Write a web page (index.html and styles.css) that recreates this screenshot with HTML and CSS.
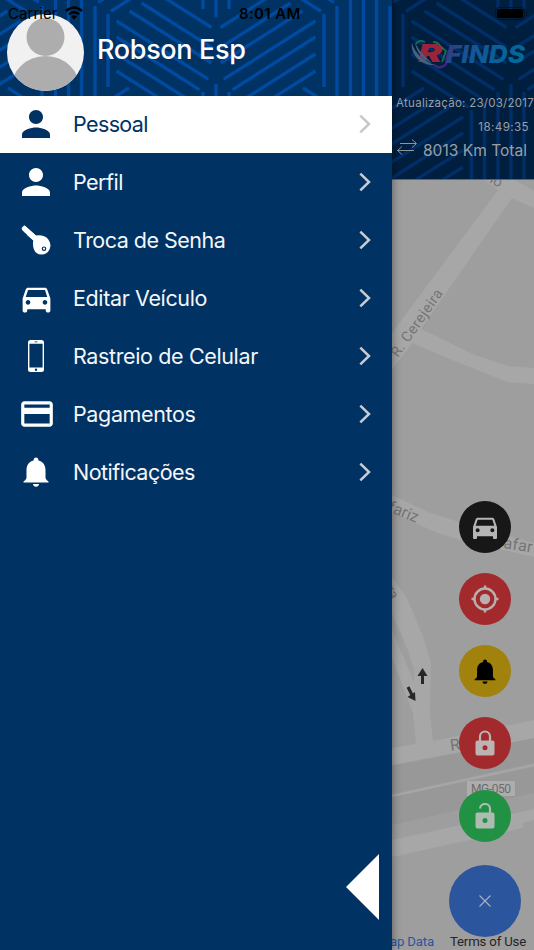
FILE: index.html
```html
<!DOCTYPE html>
<html lang="pt-BR">
<head>
<meta charset="utf-8">
<title>RFinds</title>
<link rel="stylesheet" href="styles.css">
</head>
<body>
<svg class="defs" width="0" height="0" aria-hidden="true">
  <defs>
    <g id="half">
      <path d="M39.5 14V87M26.5 6V96M13 -4V105M48 21L140 79.4M48 37L131 89.7M48 54L118 98.4M48 71L105 107.2M61 11L143 63M73 3L143 47.5M87 -8L143 27.5"/>
    </g>
    <g id="motif" fill="none" stroke-width="3.4">
      <path d="M0 -12V113"/>
      <use href="#half"/>
      <use href="#half" transform="scale(-1 1)"/>
    </g>
    <g id="weave">
      <use href="#motif" x="-79" y="-96"/><use href="#motif" x="216" y="-96"/><use href="#motif" x="511" y="-96"/>
      <use href="#motif" x="68.5"/><use href="#motif" x="363.5"/><use href="#motif" x="658.5"/>
      <use href="#motif" x="-79" y="96"/><use href="#motif" x="216" y="96"/><use href="#motif" x="511" y="96"/>
    </g>
    <symbol id="person" viewBox="0 0 24 24"><path d="M12 12c2.21 0 4-1.79 4-4s-1.79-4-4-4-4 1.79-4 4 1.79 4 4 4zm0 2c-2.67 0-8 1.34-8 4v2h16v-2c0-2.66-5.33-4-8-4z"/></symbol>
    <symbol id="car" viewBox="0 0 24 24"><path d="M18.92 6.01C18.72 5.42 18.16 5 17.5 5h-11c-.66 0-1.21.42-1.42 1.01L3 12v8c0 .55.45 1 1 1h1c.55 0 1-.45 1-1v-1h12v1c0 .55.45 1 1 1h1c.55 0 1-.45 1-1v-8l-2.08-5.99zM6.5 16c-.83 0-1.5-.67-1.5-1.5S5.67 13 6.5 13s1.5.67 1.5 1.5S7.33 16 6.5 16zm11 0c-.83 0-1.5-.67-1.5-1.5s.67-1.5 1.5-1.5 1.5.67 1.5 1.5-.67 1.5-1.5 1.5zM5 11l1.5-4.5h11L19 11H5z"/></symbol>
    <symbol id="bell" viewBox="0 0 26 30"><path d="M13 .5c1.4 0 2.4 1 2.4 2.3v.7c4.600 1.100 7.100 4.700 7.100 9.500v7.500c0 1.500 1 2.600 3 4v1H.5v-1c2-1.400 3-2.500 3-4V13c0-4.800 2.500-8.400 7.100-9.500v-.7C10.600 1.500 11.600.5 13 .5zM10 27h6c0 1.600-1.300 2.800-3 2.800S10 28.600 10 27z"/></symbol>
    <symbol id="chevron" viewBox="0 0 12 20"><path d="M1.300 1.700L10 10L1.300 18.300" fill="none" stroke="currentColor" stroke-width="2.500"/></symbol>
  </defs>
</svg>
<div class="screen">
  <header class="top">
    <svg class="weave dim" width="534" height="180"><use href="#weave"/></svg>
    <div class="info">
      <svg class="logo" width="118" height="34" viewBox="0 0 118 34">
        <defs><linearGradient id="blue" x1="0" x2="1" y1="0" y2=".3"><stop offset="0" stop-color="#403078"/><stop offset=".35" stop-color="#185294"/><stop offset="1" stop-color="#006a9c"/></linearGradient></defs>
        <path d="M7 7Q10 2 16 5M24 5Q29 5 31 9L37 14L33 25" fill="none" stroke="#176e4c" stroke-width="1.800"/>
        <path d="M25 28Q32 33 37 27L39 16Q41 11 47 11" fill="none" stroke="#3b267b" stroke-width="2.600"/>
        <text x="9" y="25" class="logo-r" textLength="24" lengthAdjust="spacingAndGlyphs">R</text>
        <path d="M3 6C1 16 11 29 26 28C14 24 5 15 3 6zM6 5C7 15 14 23 23 26C16 20 9 13 6 5z" fill="#47627f"/>
        <text x="37" y="25.500" class="logo-finds" fill="url(#blue)" textLength="79" lengthAdjust="spacingAndGlyphs">FINDS</text>
      </svg>
      <div class="update">Atualização: 23/03/2017</div>
      <div class="time">18:49:35</div>
      <div class="distance">
        <svg width="22" height="17" viewBox="0 0 22 17" fill="none" stroke="#8d949c" stroke-width="1"><path d="M4 4.500H20M16 .5L20.500 4.500L16 8.500M18 11.500H1.500M6 7.500L1.500 11.500L6 15.500"/></svg>
        <span>8013 Km Total</span>
      </div>
    </div>
  </header>
  <main class="map">
    <svg class="roads" width="534" height="770" viewBox="0 180 534 770">
      <g fill="#989898"><path d="M392 766L534 738V763L392 794zM392 797L534 767V793L392 825z"/></g>
      <g fill="#a7a7a7">
        <path d="M485 180H515L534 191V208L512 198L421 329L475 355L508 366L534 368V384L507 382L485 373L452 360L412 343L392 370V333L498 190z"/>
        <path d="M392 495L428 512L462 523L534 543V557L460 540L435 532L392 512z"/>
        <path d="M392 577L408 600L423 637L431 663L430 713L433 741L534 720V738L392 765V748L416 744L413 713L392 658V630L414 682V670L408 650L392 613z"/>
        <path d="M392 840L534 809V820L523 823V828L392 857z"/>
      </g>
      <path d="M392 796L534 765" stroke="#a7a7a7" stroke-width="2"/>
      <g class="street">
        <text transform="translate(398 358) rotate(-55)" textLength="79">R. Cerejeira</text>
        <text transform="translate(489 182) rotate(29)">io</text>
        <text class="major" transform="translate(387 511) rotate(22)">fariz</text>
        <text class="major" transform="translate(503 548) rotate(9)" textLength="29">afar</text>
        <text transform="translate(385 589) rotate(63)">ra</text>
        <text transform="translate(451 751) rotate(-9)" font-size="16">R.</text>
      </g>
      <rect x="467" y="781" width="48" height="15" rx="1" fill="#adadad"/>
      <text class="route" x="471" y="793" textLength="40">MG-050</text>
      <g fill="none" stroke="#252823" stroke-width="3"><path d="M422.500 684V673M408 687L412.500 696"/></g>
      <path d="M422.500 668L427.500 676H417.500zM415.500 701L407.500 697L415 692z" fill="#252823"/>
    </svg>
    <div class="legal"><a>Map Data</a><span>Terms of Use</span></div>
    <div class="fabs">
      <button class="fab black"><svg width="32" height="32" fill="#b5b5b5"><use href="#car"/></svg></button>
      <button class="fab red"><svg width="28" height="28" viewBox="0 0 28 28" fill="none" stroke="#b8b0b0" stroke-width="2.400"><circle cx="14" cy="14" r="10.500"/><circle cx="14" cy="14" r="5.200" fill="#b8b0b0" stroke="none"/><path d="M14 .5V4M14 24V27.500M.5 14H4M24 14H27.500"/></svg></button>
      <button class="fab yellow"><svg width="22" height="25"><use href="#bell"/></svg></button>
      <button class="fab red"><svg width="20" height="26" viewBox="0 0 20 26"><path d="M5 11V6.500a5 5 0 0 1 10 0V11" fill="none" stroke="#bcb3b3" stroke-width="2.200"/><path fill-rule="evenodd" d="M2.500 10.500h15a2 2 0 0 1 2 2v11a2 2 0 0 1-2 2h-15a2 2 0 0 1-2-2v-11a2 2 0 0 1 2-2zM10 15.200a2.500 2.500 0 1 0 0 5a2.500 2.500 0 1 0 0-5z" fill="#bcb3b3"/></svg></button>
      <button class="fab green"><svg width="20" height="26" viewBox="0 0 20 26"><path d="M5 5.500a5 5 0 0 1 10 1V11" fill="none" stroke="#aebbb1" stroke-width="2.200"/><path fill-rule="evenodd" d="M2.500 9.500h15a2 2 0 0 1 2 2v12a2 2 0 0 1-2 2h-15a2 2 0 0 1-2-2v-12a2 2 0 0 1 2-2zM10 15a2.500 2.500 0 1 0 0 5a2.500 2.500 0 1 0 0-5z" fill="#aebbb1"/></svg></button>
      <button class="fab close"><svg width="12" height="12" viewBox="0 0 12 12" stroke="#a9b3c5" stroke-width="1.100"><path d="M.5 .5L11.500 11.500M11.500 .5L.5 11.500"/></svg></button>
    </div>
  </main>

  <aside class="drawer">
    <div class="profile">
      <svg class="weave" width="392" height="96"><use href="#weave"/></svg>
      <svg class="avatar" width="77" height="77" viewBox="0 0 77 77"><defs><clipPath id="disc"><circle cx="38.500" cy="38.500" r="38.500"/></clipPath></defs><g clip-path="url(#disc)"><rect width="77" height="77" fill="#f1f1f1"/><circle cx="38.500" cy="23" r="19" fill="#adadad"/><ellipse cx="38.500" cy="76" rx="35" ry="34" fill="#adadad"/></g></svg>
      <h1>Robson Esp</h1>
    </div>
    <nav>
      <a class="row active"><span class="icon"><svg width="42" height="42"><use href="#person"/></svg></span><span class="label tight">Pessoal</span><svg class="go" width="12" height="20"><use href="#chevron"/></svg></a>
      <a class="row"><span class="icon"><svg width="42" height="42"><use href="#person"/></svg></span><span class="label tight">Perfil</span><svg class="go" width="12" height="20"><use href="#chevron"/></svg></a>
      <a class="row"><span class="icon"><svg width="30" height="30" viewBox="0 0 30 30"><path d="M2.500 2.800L18 17" stroke="#fff" stroke-width="5.200"/><path d="M.3 3.200L3.300 .3L15 10.500Q23 9.500 27 14Q31 19 28.500 24.500Q26 29.500 20.500 29.500Q15 29.500 13 24.500Q11.300 20 12.300 15.500L6 10L5.800 7.900L3.800 7.600L3.500 5.500z"/><circle cx="23" cy="23.700" r="1.700" fill="none" stroke="#003264" stroke-width="1.200"/></svg></span><span class="label tight">Troca de Senha</span><svg class="go" width="12" height="20"><use href="#chevron"/></svg></a>
      <a class="row"><span class="icon"><svg width="37" height="37"><use href="#car"/></svg></span><span class="label">Editar Veículo</span><svg class="go" width="12" height="20"><use href="#chevron"/></svg></a>
      <a class="row"><span class="icon"><svg width="16" height="32" viewBox="0 0 16 32"><path fill-rule="evenodd" d="M2.500 0h11A2.500 2.500 0 0 1 16 2.500v27a2.500 2.500 0 0 1-2.500 2.500h-11A2.500 2.500 0 0 1 0 29.500v-27A2.500 2.500 0 0 1 2.500 0zM1.400 3.700V27.600H14.600V3.700zM6.500 1.600V2.300H9.500V1.600zM8 28.600a1.200 1.200 0 1 0 0 2.400a1.200 1.200 0 1 0 0-2.400z"/></svg></span><span class="label">Rastreio de Celular</span><svg class="go" width="12" height="20"><use href="#chevron"/></svg></a>
      <a class="row"><span class="icon wide"><svg width="38" height="38" viewBox="0 0 24 24"><path d="M20 4H4c-1.110 0-1.990.890-1.990 2L2 18c0 1.110.890 2 2 2h16c1.110 0 2-.890 2-2V6c0-1.110-.890-2-2-2zm0 14H4v-6h16v6zm0-10H4V6h16v2z"/></svg></span><span class="label">Pagamentos</span><svg class="go" width="12" height="20"><use href="#chevron"/></svg></a>
      <a class="row"><span class="icon"><svg width="26" height="30"><use href="#bell"/></svg></span><span class="label tight">Notificações</span><svg class="go" width="12" height="20"><use href="#chevron"/></svg></a>
    </nav>
    <svg class="back" width="33" height="66" viewBox="0 0 33 66"><path d="M33 0V66L0 33z" fill="#fff"/></svg>
  </aside>

  <div class="status">
    <span class="carrier">Carrier</span>
    <svg class="wifi" width="18" height="14" viewBox="0 0 18 14" fill="none" stroke="#000" stroke-width="2.600"><path d="M1 5Q9 -2 17 5M4 8.300Q9 4 14 8.300"/><path d="M9 13.500L6 10.500Q9 8.200 12 10.500z" fill="#000" stroke="none"/></svg>
    <span class="clock">8:01 AM</span>
    <svg class="battery" width="33" height="13" viewBox="0 0 33 13"><rect x=".5" y=".5" width="29" height="12" rx="3.500" fill="none" stroke="#00142a"/><rect x="2" y="2" width="26" height="9" rx="2" fill="#000"/><path d="M31 4.500Q33 6.500 31 8.500z" fill="#00142a"/></svg>
  </div>
</div>
</body>
</html>
```
FILE: styles.css
```css
* { box-sizing: border-box; }
body { margin: 0; font-family: Inter, "Liberation Sans", sans-serif; }
.defs { position: absolute; }
.screen { position: relative; width: 534px; height: 950px; overflow: hidden; background: #9e9e9e; }

.top { position: relative; height: 180px; background: #001f3f; border-bottom: 1px solid #5d6670; overflow: hidden; }
.weave { position: absolute; left: 0; top: 0; stroke: #004a9f; }
.weave.dim { stroke: #002e66; }
.info { position: relative; margin-left: 392px; height: 180px; padding: 37px 7px 0 4px; color: #9b9fa5; display: flex; flex-direction: column; align-items: flex-end; white-space: nowrap; }
.logo { margin-right: 0; flex: none; }
.logo-r { font: italic 900 25px Inter, sans-serif; fill: #9c2439; }
.logo-finds { font: italic 800 25px Inter, sans-serif; }
.update { margin: 24px -7px 0 0; font-size: 11.500px; line-height: 16px; letter-spacing: .26px; }
.time { margin-top: 8px; margin-right: -2px; font-size: 11.600px; line-height: 16px; letter-spacing: .4px; }
.distance { display: flex; align-items: flex-start; gap: 5px; margin-top: 4px; font-size: 15.500px; line-height: 23px; letter-spacing: .03px; }

.map { position: relative; height: 770px; }
.roads { display: block; }
.street { font: 14.5px Roboto, sans-serif; fill: #757575; }
.major { font-size: 16px; }
.route { font: 12px Roboto, sans-serif; fill: #6c6c6c; }
.legal { position: absolute; right: 8px; bottom: 0; display: flex; gap: 16px; font: 13.2px/17px Roboto, sans-serif; letter-spacing: -.17px; color: #252525; }
.legal a { color: #2c549b; }
.fabs { position: absolute; right: 13px; top: 320.500px; width: 72px; display: flex; flex-direction: column; align-items: center; gap: 20.300px; }
.fab { width: 52px; height: 52px; border: 0; border-radius: 50%; padding: 0; display: flex; align-items: center; justify-content: center; flex: none; }
.black { background: #171717; }
.red { background: #a22a2c; }
.yellow { background: #a1820c; }
.green { background: #219144; }
.close { width: 72px; height: 72px; margin-top: 3px; background: #2b559d; }

.drawer { position: absolute; left: 0; top: 0; width: 392px; height: 950px; background: #003264; box-shadow: 0 0 9px rgba(0,0,0,.45); }
.profile { position: relative; height: 96px; display: flex; align-items: flex-start; padding: 13.500px 0 0 7px; gap: 13px; overflow: hidden; }
.avatar { position: relative; flex: none; }
h1 { position: relative; margin: 18.500px 0 0; color: #fff; font-size: 27px; line-height: 36px; font-weight: 500; letter-spacing: -.33px; white-space: nowrap; }
.row { display: flex; align-items: center; height: 58px; padding-right: 21px; color: #c9ccd2; fill: #fff; }
.row.active { height: 57px; padding-bottom: 2px; background: #fff; fill: #003264; color: #c7c7cc; }
.icon { width: 73px; padding-right: 1px; display: flex; justify-content: center; }
.icon.wide { padding-right: 0; }
.label { flex: 1; color: #f4f6f8; font-size: 21.500px; line-height: 30px; letter-spacing: -.37px; white-space: nowrap; }
.label.tight { letter-spacing: -.52px; }
.active .label { color: #003264; letter-spacing: -.62px; }
.back { position: absolute; left: 346px; top: 854px; }

.status { position: absolute; left: 0; top: 0; width: 534px; height: 28px; color: #000; font-size: 15px; line-height: 28px; }
.status > * { position: absolute; }
.carrier { left: 8px; top: 0; letter-spacing: .05px; }
.wifi { left: 65px; top: 6px; }
.clock { left: 239px; top: 0; font-weight: 600; letter-spacing: .35px; }
.battery { left: 495px; top: 7px; }
```
